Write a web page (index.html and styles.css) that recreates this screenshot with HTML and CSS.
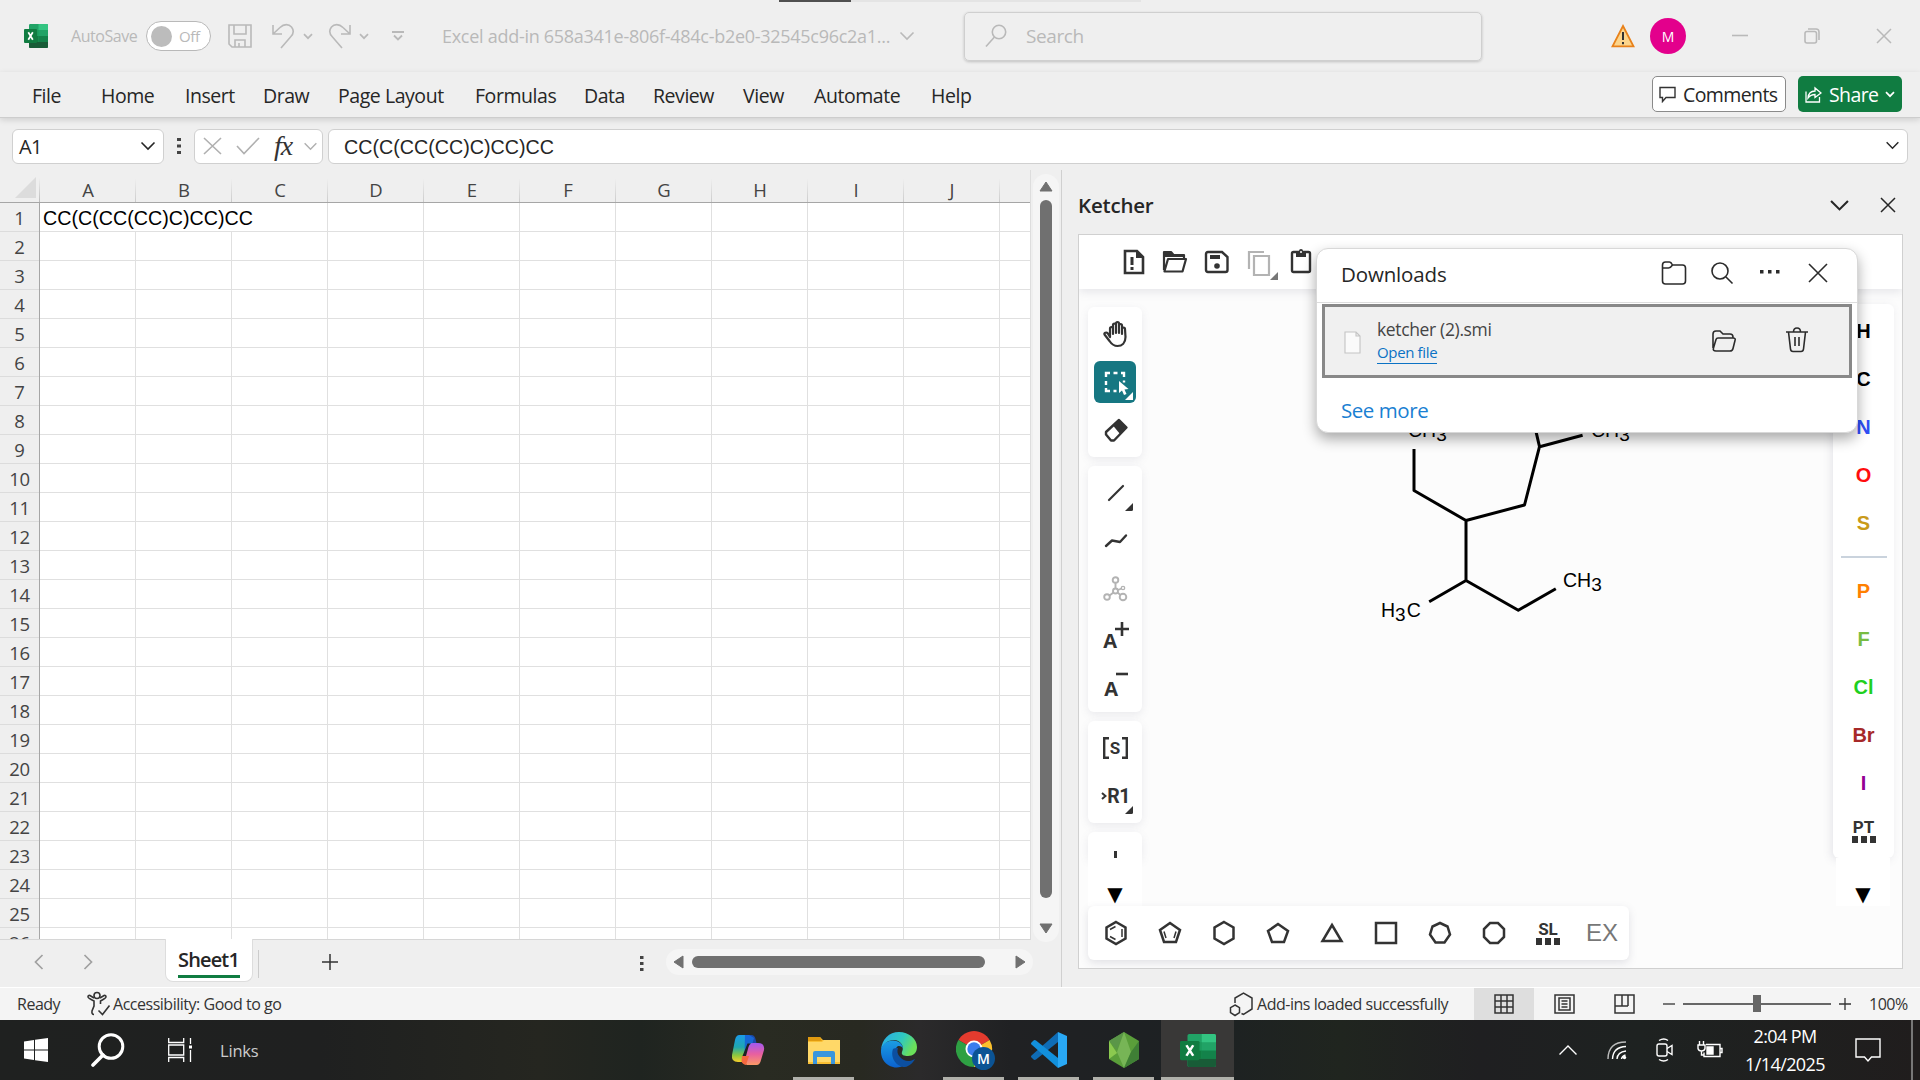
FILE: index.html
```html
<!DOCTYPE html>
<html lang="en">
<head>
<meta charset="utf-8">
<title>Excel - Ketcher add-in</title>
<link rel="stylesheet" href="styles.css">
</head>
<body>
<svg class="defs" width="0" height="0">
  <defs>
    <linearGradient id="cpA" x1="0" y1="0" x2="0" y2="1"><stop offset="0" stop-color="#1b9be8"/><stop offset=".45" stop-color="#1fa7b0"/><stop offset=".75" stop-color="#8cc63f"/><stop offset="1" stop-color="#f7d02c"/></linearGradient>
    <linearGradient id="cpB" x1="0" y1="0" x2="0" y2="1"><stop offset="0" stop-color="#a259f0"/><stop offset=".5" stop-color="#e85fa0"/><stop offset="1" stop-color="#fb9a66"/></linearGradient>
    <linearGradient id="edA" x1="0" y1="0" x2="1" y2=".4"><stop offset="0" stop-color="#2aa7ea"/><stop offset=".6" stop-color="#2fc9c0"/><stop offset="1" stop-color="#6be05a"/></linearGradient>
    <linearGradient id="edB" x1="0" y1="0" x2="0" y2="1"><stop offset="0" stop-color="#1b9de2"/><stop offset="1" stop-color="#0b62cf"/></linearGradient>
    <symbol id="chev" viewBox="0 0 16 10"><path d="M1.500 1.500 8 8l6.500-6.500" fill="none" stroke="currentColor" stroke-width="1.600"/></symbol>
    <symbol id="chevb" viewBox="0 0 10 7"><path d="M1 1.200 5 5.200l4-4" fill="none" stroke="currentColor" stroke-width="1.700"/></symbol>
    <symbol id="x" viewBox="0 0 16 16"><path d="M1 1l14 14M15 1 1 15" fill="none" stroke="currentColor" stroke-width="1.500"/></symbol>
    <symbol id="excel" viewBox="0 0 24 24">
      <rect x="5" y="0" width="19" height="24" rx="1.200" fill="#21a366"/><path d="M14.500 0h8.300A1.200 1.200 0 0 1 24 1.200V6h-9.500z" fill="#33c481"/><path d="M5 6h9.500v6H5z" fill="#1b9a5c"/><path d="M5 12h9.500v6H5z" fill="#107c41"/><path d="M14.500 12H24v6h-9.500z" fill="#13824a"/><path d="M5 18h19v4.800a1.200 1.200 0 0 1-1.200 1.200H6.200A1.200 1.200 0 0 1 5 22.800z" fill="#185c37"/>
      <rect x="0" y="5" width="13" height="14" rx="1" fill="#107c41"/><path d="M4.300 8.200l4.500 7.600M8.800 8.200l-4.500 7.600" stroke="#fff" stroke-width="1.700"/>
    </symbol>
    <symbol id="tri" viewBox="0 0 8 8"><path d="M8 0v6.500A1.500 1.500 0 0 1 6.500 8H0z" fill="currentColor"/></symbol>
  </defs>
</svg>

<header class="titlebar">
  <div class="progress"><i></i></div>
  <svg class="logo" width="24" height="24"><use href="#excel"/></svg>
  <span class="autosave">AutoSave</span>
  <div class="toggle"><i></i><span>Off</span></div>
  <svg class="ic-save" width="24" height="24" viewBox="0 0 24 24"><path d="M1 1h22v22H4l-3-3zM6 1v9h12V1M7 23v-7h10v7M11 23v-4" class="ln"/></svg>
  <svg class="ic-undo" width="23" height="26" viewBox="0 0 23 26"><path d="M1 2v9h9M1 11 8 4.500C12 .5 17 1 19.500 4c2.500 3.200 2 7-1 10L9 25" class="ln"/></svg>
  <svg class="ic-c1" width="10" height="7"><use href="#chevb"/></svg>
  <svg class="ic-redo" width="23" height="26" viewBox="0 0 23 26"><path d="M22 2v9h-9M22 11 15 4.500C11 .5 6 1 3.500 4c-2.500 3.200-2 7 1 10L14 25" class="ln"/></svg>
  <svg class="ic-c2" width="10" height="7"><use href="#chevb"/></svg>
  <svg class="ic-cust" width="12" height="12" viewBox="0 0 12 12"><path d="M0 2h12M2 5.500 6 9.500l4-4" fill="none" stroke="currentColor" stroke-width="1.800"/></svg>
  <span class="doc">Excel add-in 658a341e-806f-484c-b2e0-32545c96c2a1...</span>
  <svg class="ic-c3" width="16" height="10"><use href="#chev"/></svg>
  <div class="search">
    <svg width="22" height="24" viewBox="0 0 22 24"><circle cx="14" cy="8" r="6.700" class="ln"/><path d="M9.500 13 1 22.500" class="ln"/></svg>
    <span>Search</span>
  </div>
  <svg class="warn" width="24" height="24" viewBox="0 0 24 24"><path d="M12 2 22.500 22.300h-21z" fill="#fcd58c" stroke="#e8811a" stroke-width="1.800"/><path d="M12 8v8M12 18v2.200" stroke="#333" stroke-width="2"/></svg>
  <div class="avatar">M</div>
  <svg class="win first" width="16" height="16" viewBox="0 0 16 16"><path d="M0 7.500h16" class="ln"/></svg>
  <svg class="win" width="16" height="16" viewBox="0 0 16 16"><rect x="1" y="3.500" width="11.500" height="11.500" rx="2" class="ln"/><path d="M4 1h8q3 0 3 3v8" class="ln"/></svg>
  <svg class="win" width="16" height="16"><use href="#x"/></svg>
</header>

<nav class="ribbon">
  <div class="tabs"><span>File</span><span>Home</span><span>Insert</span><span>Draw</span><span>Page Layout</span><span>Formulas</span><span>Data</span><span>Review</span><span>View</span><span>Automate</span><span>Help</span></div>
  <div class="btn comments"><svg width="17" height="17" viewBox="0 0 17 17"><path d="M1 1.500h15v10H7l-3.500 4v-4H1z" fill="none" stroke="#333" stroke-width="1.400"/></svg><span>Comments</span></div>
  <div class="btn share"><svg width="18" height="18" viewBox="0 0 18 18"><path d="M2 6.500V17h13.500v-5M4 13c.5-5 3-7 7-7V3l6 5-6 4.500V9.500c-3 0-5 1-7 3.500z" fill="none" stroke="#fff" stroke-width="1.300"/></svg><span>Share</span><svg width="10" height="7"><use href="#chevb"/></svg></div>
</nav>

<section class="fbar">
  <div class="namebox"><span>A1</span><svg width="16" height="10"><use href="#chev"/></svg></div>
  <svg class="dots" width="4" height="18" viewBox="0 0 4 18"><path d="M0 1h4v3H0zM0 7.500h4v3H0zM0 14h4v3H0z" fill="#444"/></svg>
  <div class="fx">
    <svg width="19" height="18" viewBox="0 0 19 18"><path d="M1 1l17 16M18 1 1 17" class="ln"/></svg>
    <svg width="24" height="18" viewBox="0 0 24 18"><path d="M1 9l7 7.500L23 1" class="ln"/></svg>
    <em>fx</em>
    <svg class="c" width="15" height="9"><use href="#chev"/></svg>
  </div>
  <div class="formula"><span>CC(C(CC(CC)C)CC)CC</span><svg width="15" height="9"><use href="#chev"/></svg></div>
</section>

<main>
  <section class="book">
    <div class="sheetrow">
      <div class="sheet">
        <div class="colhead"><b></b><span>A</span><span>B</span><span>C</span><span>D</span><span>E</span><span>F</span><span>G</span><span>H</span><span>I</span><span>J</span><span class="rest"></span></div>
        <div class="rows">
          <div class="rowhead"><span>1</span><span>2</span><span>3</span><span>4</span><span>5</span><span>6</span><span>7</span><span>8</span><span>9</span><span>10</span><span>11</span><span>12</span><span>13</span><span>14</span><span>15</span><span>16</span><span>17</span><span>18</span><span>19</span><span>20</span><span>21</span><span>22</span><span>23</span><span>24</span><span>25</span><span>26</span></div>
          <div class="cells"><div class="a1">CC(C(CC(CC)C)CC)CC</div></div>
        </div>
      </div>
      <div class="vscroll"><svg width="14" height="11" viewBox="0 0 14 11"><path d="M7 1 13 10H1z" fill="#707070" stroke="#707070" stroke-linejoin="round"/></svg><i></i><svg width="14" height="11" viewBox="0 0 14 11"><path d="M7 10 1 1h12z" fill="#707070" stroke="#707070" stroke-linejoin="round"/></svg></div>
    </div>
    <div class="sheettabs">
      <svg class="prev" width="10" height="16" viewBox="0 0 10 16"><path d="M8.500 1 1.500 8l7 7" fill="none" stroke="#a0a0a0" stroke-width="1.700"/></svg>
      <svg class="next" width="10" height="16" viewBox="0 0 10 16"><path d="M1.500 1l7 7-7 7" fill="none" stroke="#a0a0a0" stroke-width="1.700"/></svg>
      <div class="tab"><span>Sheet1</span></div>
      <i class="sep"></i>
      <svg class="plus" width="18" height="18" viewBox="0 0 18 18"><path d="M9 1v16M1 9h16" stroke="#333" stroke-width="1.500"/></svg>
      <svg class="tdots" width="4" height="16" viewBox="0 0 4 16"><path d="M0 0h3.500v3H0zM0 6h3.500v3H0zM0 12h3.500v3H0z" fill="#444"/></svg>
      <div class="hscroll"><svg width="11" height="14" viewBox="0 0 11 14"><path d="M1 7 10 1v12z" fill="#707070" stroke="#707070" stroke-linejoin="round"/></svg><i></i><svg width="11" height="14" viewBox="0 0 11 14"><path d="M10 7 1 1v12z" fill="#707070" stroke="#707070" stroke-linejoin="round"/></svg></div>
    </div>
  </section>

  <aside class="pane">
    <div class="panehead"><h2>Ketcher</h2><svg width="21" height="13"><use href="#chev"/></svg><svg width="16" height="16"><use href="#x"/></svg></div>
    <div class="ketcher">
      <div class="ktop">
        <svg width="24" height="26" viewBox="0 0 24 26"><path d="M3 2h12l6 6v16H3z" fill="none" stroke="currentColor" stroke-width="2.600"/><path d="M14 2v7h7zM8.500 8h3v8h-3zM8.500 18h3v3h-3z" fill="currentColor"/></svg>
        <svg width="26" height="26" viewBox="0 0 26 26"><path d="M2 21V3h7l2.500 3H22v4M2.500 22 6 10h18l-3.500 12.500H2.500z" fill="none" stroke="currentColor" stroke-width="2.200" stroke-linejoin="round"/><path d="M2 3h7l2.500 3H22v2H2z" fill="currentColor"/></svg>
        <svg width="26" height="26" viewBox="0 0 26 26"><path d="M4 3h14l5.500 5v13q0 2-2 2H4q-2 0-2-2V5q0-2 2-2z" fill="none" stroke="currentColor" stroke-width="2.400"/><path d="M6 6h10v4H6z" fill="currentColor"/><circle cx="13" cy="17" r="2.800" fill="currentColor"/></svg>
        <svg class="dim" width="32" height="32" viewBox="0 0 32 32"><path d="M2 21V4h15M7 8h15v19H7z" fill="none" stroke="#b3b3b3" stroke-width="2.200"/><path d="M31 24v8h-8z" fill="#777"/></svg>
        <svg width="22" height="26" viewBox="0 0 22 26"><rect x="2" y="4" width="18" height="20" rx="1.500" fill="none" stroke="currentColor" stroke-width="2.400"/><path d="M6 3h3a2 2 0 0 1 4 0h3v6H6z" fill="currentColor"/><circle cx="11" cy="4" r="1" fill="#fff"/></svg>
      </div>
      <div class="kbody">
        <div class="ltools">
          <div class="group g1">
            <div class="tool"><svg width="28" height="28" viewBox="0 0 28 28"><path d="M8 17V8.500q0-1.500 1.500-1.500T11 8.500V14 5q0-1.500 1.500-1.500T14 5v8V3.500Q14 2 15.500 2T17 3.500V13 5.500Q17 4 18.500 4T20 5.500V14 9q0-1.500 1.500-1.500T23 9l.5 8c0 6-3.500 9-8 9-4 0-6-2-8-5l-5-6.500c-1-1.500 2-2.500 3-1.500z" fill="none" stroke="currentColor" stroke-width="2.200" stroke-linejoin="round"/></svg></div>
            <div class="tool sel"><svg width="42" height="42" viewBox="0 0 42 42"><path d="M12 16v-4h4M19.500 12h4M27 12h3v4M12 20v4M12 27v3h4M19.500 30h3M30 19.500v2" fill="none" stroke="#fff" stroke-width="2.400"/><path d="M25 20v12l3-2.500 2 4.500 2.500-1-2-4.500 4-.5z" fill="#fff"/><path d="M39 31v8h-8z" fill="#fff"/></svg></div>
            <div class="tool"><svg width="26" height="26" viewBox="0 0 26 26"><path d="M3 15 16 3l7.500 7.500L11 23.500H8l-5-6z" fill="none" stroke="currentColor" stroke-width="2.400" stroke-linejoin="round"/><path d="M10 8.500 16 3l7.500 7.500-6.500 6.500z" fill="currentColor"/></svg></div>
          </div>
          <div class="group g2">
            <div class="tool"><svg width="20" height="20" viewBox="0 0 20 20"><path d="M3 17 17 3" stroke="currentColor" stroke-width="2.200" stroke-linecap="round"/></svg><svg class="corner" width="8" height="8"><use href="#tri"/></svg></div>
            <div class="tool"><svg width="24" height="16" viewBox="0 0 24 16"><path d="M2 13 8 7.500 16 9l6-6.500" fill="none" stroke="currentColor" stroke-width="2.400" stroke-linecap="round" stroke-linejoin="round"/></svg></div>
            <div class="tool dim"><svg width="26" height="26" viewBox="0 0 26 26" fill="none" stroke="#b3b3b3" stroke-width="1.900"><circle cx="12.500" cy="4" r="2.800"/><circle cx="12.500" cy="15" r="2.500"/><circle cx="4" cy="21" r="2.800"/><circle cx="20" cy="21" r="3.300"/><circle cx="20" cy="12" r="1.700" stroke-width="1.300"/><path d="M12.500 7v5.500M10.500 16.500 6.500 19.500M14.500 16.500 17.500 19M15 14l3.500-1.500"/></svg></div>
            <div class="tool aplus"><b>A</b><svg width="14" height="14" viewBox="0 0 14 14"><path d="M7 0v14M0 7h14" stroke="currentColor" stroke-width="2.600"/></svg></div>
            <div class="tool aplus"><b>A</b><svg width="12" height="14" viewBox="0 0 12 14"><path d="M0 4h12" stroke="currentColor" stroke-width="2.600"/></svg></div>
          </div>
          <div class="group g3">
            <div class="tool sg"><svg width="6" height="22" viewBox="0 0 6 22"><path d="M6 1.200H1.200v19.600H6" fill="none" stroke="currentColor" stroke-width="2.400"/></svg><b>S</b><svg width="6" height="22" viewBox="0 0 6 22"><path d="M0 1.200h4.800v19.600H0" fill="none" stroke="currentColor" stroke-width="2.400"/></svg></div>
            <div class="tool rg"><svg width="6" height="8" viewBox="0 0 6 8"><path d="M1 1l3.500 3L1 7" fill="none" stroke="currentColor" stroke-width="2"/></svg><b>R1</b><svg class="corner" width="8" height="8"><use href="#tri"/></svg></div>
          </div>
          <div class="group g4"><i></i></div>
          <div class="more">▼</div>
        </div>
        <div class="canvas">
          <svg class="mol" width="300" height="230" viewBox="1360 400 300 230">
            <path d="M1414 449v41.500l52 30 58.500-15.500 15-58.300-7-30M1539.600 446.700l43-11.500M1466 520.500v60l-36.800 21.200M1466 580.500l52.300 29.700 37.500-21.500" fill="none" stroke="#000" stroke-width="3" stroke-linejoin="round"/>
            <text x="1408" y="437">CH<tspan dy="4" font-size="19">3</tspan></text>
            <text x="1591" y="437">CH<tspan dy="4" font-size="19">3</tspan></text>
            <text x="1563" y="587">CH<tspan dy="4" font-size="19">3</tspan></text>
            <text x="1381" y="617">H<tspan dy="4" font-size="19">3</tspan><tspan dy="-4" dx="1">C</tspan></text>
          </svg>
          <div class="ktemplates">
            <svg viewBox="0 0 26 26"><path d="M13 2 22.500 7.500v11L13 24 3.500 18.500v-11z"/><path d="M7 9.500l5.500-3M19 9v8M7 16.500l5.500 3" class="thin"/></svg>
            <svg viewBox="0 0 26 26"><path d="M13 3 23 10l-4 12H7L3 10z"/><path d="M7 11.500 9 18M19 11.500 17 18" class="thin"/></svg>
            <svg viewBox="0 0 26 26"><path d="M13 2 22.500 7.500v11L13 24 3.500 18.500v-11z"/></svg>
            <svg viewBox="0 0 26 26"><path d="M13 4 23 11l-4 11H7L3 11z"/></svg>
            <svg viewBox="0 0 26 26"><path d="M13 5 22.500 21h-19z"/></svg>
            <svg viewBox="0 0 26 26"><path d="M3 3h20v20H3z"/></svg>
            <svg viewBox="0 0 26 26"><path d="M13 3l7.500 3.500 2.500 8-5.500 8h-9L3 14.500l2.500-8z"/></svg>
            <svg viewBox="0 0 26 26"><path d="M9 3h8l6 6v8l-6 6H9l-6-6V9z"/></svg>
            <div class="lib"><b>SL</b><i></i></div>
            <span class="ex">EX</span>
          </div>
        </div>
        <div class="atoms">
          <div class="alist"><b class="h">H</b><b class="h">C</b><b class="n">N</b><b class="o">O</b><b class="s">S</b><hr><b class="p">P</b><b class="f">F</b><b class="cl">Cl</b><b class="br">Br</b><b class="i">I</b><div class="lib"><b>PT</b><i></i></div></div>
          <div class="more">▼</div>
        </div>
      </div>
    </div>
    <div class="downloads">
      <div class="dhead"><span>Downloads</span>
        <svg width="26" height="26" viewBox="0 0 26 26"><path d="M1.500 5q0-3 3-3h4q1.500 0 3 3h10q3 0 3 3v13q0 3-3 3h-17q-3 0-3-3zM1.500 8h6q2 0 4-3" /></svg>
        <svg width="24" height="24" viewBox="0 0 24 24"><circle cx="10" cy="10" r="8"/><path d="M16 16l6.500 6.500"/></svg>
        <svg width="22" height="6" viewBox="0 0 22 6"><path d="M1 1h3.500v3.500H1zM9 1h3.500v3.500H9zM17 1h3.500v3.500H17z" class="fill"/></svg>
        <svg width="20" height="20" viewBox="0 0 20 20"><path d="M1 1l18 18M19 1 1 19"/></svg>
      </div>
      <div class="ditem">
        <svg class="file" width="17" height="23" viewBox="0 0 17 23"><path d="M1 1h11l4 4v17H1zM12 1v4h4" fill="#fafafa" stroke="#c4c4c4" stroke-width="1.100"/></svg>
        <div class="dname"><span>ketcher (2).smi</span><a>Open file</a></div>
        <svg class="of" width="26" height="24" viewBox="0 0 26 24"><path d="M2 19V5q0-3 3-3h4l3 3h7q3 0 3 3v1M7 9h15q3 0 2 2.500l-2 8q-.5 2.500-3 2.500H5q-3.500 0-2.500-3L5 10.500Q5.500 9 7 9z"/></svg>
        <svg class="del" width="24" height="26" viewBox="0 0 24 26"><path d="M1 5h22M8.500 5q0-4 3.500-4t3.500 4M3.500 5l2 17q.3 2.500 2.500 2.500h8q2.200 0 2.500-2.500l2-17M10 10v9M14 10v9"/></svg>
      </div>
      <a class="seemore">See more</a>
    </div>
  </aside>
</main>

<footer class="status">
  <span class="ready">Ready</span>
  <svg class="acc" width="24" height="26" viewBox="0 0 24 26" fill="none" stroke="#333" stroke-width="1.600"><circle cx="10" cy="4.500" r="3"/><path d="M7 7 3 4.500Q1 4 1 6q0 1 6 4v5l-2 5q-.5 3.500 2 3.500M13 7l4-2.500q2-.5 2 1.500 0 1-5.500 4v3M11.500 19.500l4 4 7-9"/></svg>
  <span class="good">Accessibility: Good to go</span>
  <svg class="addin" width="25" height="25" viewBox="0 0 25 25" fill="none" stroke="#333" stroke-width="1.500"><path d="M6 11V6l8.500-5L23 6v11l-8.500 5.500-2-1M6 13l4.500 2.700v5L6 23.500l-4.500-2.800v-5z"/></svg>
  <span class="loaded">Add-ins loaded successfully</span>
  <div class="view on"><svg width="20" height="20" viewBox="0 0 20 20"><path d="M1 1h18v18H1zM7 1v18M13 1v18M1 7h18M1 13h18"/></svg></div>
  <div class="view"><svg width="21" height="20" viewBox="0 0 21 20"><path d="M1 1h19v18H1zM5 4h11v12H5zM7.500 7h6M7.500 10h6M7.500 13h6"/></svg></div>
  <div class="view"><svg width="21" height="20" viewBox="0 0 21 20"><path d="M1 1h19v18H1zM8 1v11M14 1v11M1 12h13"/></svg></div>
  <svg class="zm" width="12" height="12" viewBox="0 0 12 12"><path d="M0 6h12" stroke="#333" stroke-width="1.300"/></svg>
  <div class="slider"><i></i></div>
  <svg class="zp" width="12" height="12" viewBox="0 0 12 12"><path d="M0 6h12M6 0v12" stroke="#333" stroke-width="1.300"/></svg>
  <span class="pct">100%</span>
</footer>

<footer class="taskbar">
  <div class="tleft">
    <svg width="24" height="24" viewBox="0 0 24 24"><path d="M0 3.500 10 2v9.500H0zM11 1.800 24 0v11.500H11zM0 12.500h10V22L0 20.500zM11 12.500h13V24l-13-1.800z" fill="#fff"/></svg>
    <svg width="34" height="34" viewBox="0 0 34 34"><circle cx="20" cy="13.500" r="11.800" fill="none" stroke="#fff" stroke-width="3"/><path d="M12 22 2 32" stroke="#fff" stroke-width="3.600" stroke-linecap="round"/></svg>
    <svg width="24" height="24" viewBox="0 0 24 24"><path d="M.7 0v4.500h15V0M.7 24v-4.500h15V24M.7 7h15v10h-15zM22.500 0v6M22.500 12v12" fill="none" stroke="#fff" stroke-width="1.300"/><path d="M21 7.500h3v3h-3z" fill="#fff"/></svg>
    <span>Links</span>
  </div>
  <div class="apps">
    <div class="app"><svg width="36" height="36" viewBox="0 0 36 36"><path d="M9.500 3H19l5 3-6 20q-1 4-5 4H8Q1 30 2 23L5 8q1-5 4.500-5z" fill="url(#cpA)"/><path d="M15 3h6.500q3 0 4 4l1 4h-5q-3 0-4 4l-3 9z" fill="#1554d6" opacity=".75"/><path d="M26.500 33H17l-5-3 6-15q1-4 5-4h5q7 0 6 7l-3 10q-1 5-4.500 5z" fill="url(#cpB)"/><path d="M12 24h7l-3 9q-4-1-4.500-4z" fill="#f5683f"/><path d="M17.500 11.500h3.500q-2 1-2.500 3.500L16 24h-3.500z" fill="#1e2122"/></svg></div>
    <div class="app run"><svg width="36" height="36" viewBox="0 0 36 36"><path d="M2 5h12l3 3h17v24H2z" fill="#f9bf33"/><path d="M2 5h12l2 4H2z" fill="#e09a10"/><path d="M2 10h14l2-2h16v22H2z" fill="#ffd868"/><path d="M7 32V21q0-2 2-2h18q2 0 2 2v11h-4v-7H11v7z" fill="#3a96dd"/></svg></div>
    <div class="app"><svg width="36" height="36" viewBox="0 0 36 36"><path d="M0 18C1 7 8 0 18 0s18 7 18 15c0 6-4 9-9 9-4 0-7-1-6-4 3-6-2-12-8-12C7 8 2 12 0 18z" fill="url(#edA)"/><path d="M0 18C1 12 6 8.500 12 8.500c6 0 10 4 10 8-2-3-5-3-6.500-1-3 4 0 15 9 16.500C20 36 15 36 12 35 4 33-.5 26 0 18z" fill="url(#edB)"/><path d="M12 17c-3 8 3 18 12 18 4-.5 8-4 10-8-5 3-11 3-15-2-3-3-3-6-2-9-2 0-4 0-5 1z" fill="#0c4fa0"/></svg></div>
    <div class="app run chrome"><svg width="40" height="40" viewBox="0 0 40 40"><path d="M18 18 2.500 9A18 18 0 0 1 33.600 9z" fill="#e33b2e"/><path d="M18 18 33.600 9A18 18 0 0 1 18 36z" fill="#fbc02d"/><path d="M18 18v18A18 18 0 0 1 2.400 9z" fill="#2ea043"/><circle cx="18" cy="18" r="8.500" fill="#fff"/><circle cx="18" cy="18" r="6.700" fill="#3b7ded"/><circle cx="27.500" cy="27.500" r="11.500" fill="#0b5394"/><text x="27.500" y="32.500" text-anchor="middle" class="badge">M</text></svg></div>
    <div class="app run"><svg width="36" height="36" viewBox="0 0 36 36"><path d="M27 0 36 4v28l-9 4z" fill="#29a8f5"/><path d="M27 0v10L5 27.500Q3.500 28.500 2 27L.5 25.500q-1-1 0-2z" fill="#0f6cb5"/><path d="M27 36V26L5 8.500Q3.500 7.500 2 9L.5 10.500q-1 1 0 2z" fill="#1290dc"/></svg></div>
    <div class="app run"><svg width="32" height="36" viewBox="0 0 32 36"><path d="M16 0 31 9v18l-15 9L1 27V9z" fill="#5a9e3a"/><path d="M16 0 9 18 1 9z" fill="#5a9648"/><path d="M1 9l8 12-8 6z" fill="#8bc94f"/><path d="M16 0l7 20-7 16L9 20z" fill="#77b556"/><path d="M23 20 31 9v18l-15 9z" fill="#3f7f35"/></svg></div>
    <div class="app run active"><svg width="36" height="33" viewBox="0 0 24 24" preserveAspectRatio="none"><use href="#excel"/></svg></div>
  </div>
  <div class="tray">
    <svg width="20" height="12" viewBox="0 0 20 12"><path d="M1.500 10.500 10 2l8.500 8.500" /></svg>
    <svg width="20" height="20" viewBox="0 0 20 20"><path d="M1 19Q1 2 19 2" opacity=".7"/><path d="M5.500 19Q6 7 19 6.500M10 19q.5-7 9-8M14.500 19q.5-3 4-4"/><circle cx="17.500" cy="17.500" r="1.700" fill="#fff" stroke="none"/></svg>
    <svg width="20" height="24" viewBox="0 0 20 24"><rect x="2" y="6" width="10" height="12" rx="2"/><path d="M12 10.500 17 7.500v9l-5-3M4 2.500q5-3 9 0M4 21.500q5 3 9 0"/></svg>
    <svg width="26" height="20" viewBox="0 0 26 20"><path d="M9 4.500h14v12H7v-4M23 8.500h2v4h-2"/><path d="M10 7h6v7h-6z" fill="#fff"/><path d="M2.500 1v4M6.500 1v4M1 5h7v3.500Q7.500 11 4.500 11T1 8.500zM4.500 11v4H7"/></svg>
    <div class="clock"><span>2:04 PM</span><span>1/14/2025</span></div>
    <svg class="note" width="26" height="26" viewBox="0 0 26 26"><path d="M1 2h24v18h-8.500L13 24l-3.500-4H1z"/></svg>
    <i></i>
  </div>
</footer>
</body>
</html>
```
FILE: styles.css
```css
* { box-sizing: border-box; }
body { margin: 0; width: 1920px; height: 1080px; overflow: hidden; background: #efefef; font-family: "Open Sans", "Noto Sans", sans-serif; color: #262626; display: flex; flex-direction: column; white-space: nowrap; }
svg { flex: none; display: block; }
.defs { position: absolute; }
.ln { fill: none; stroke: currentColor; stroke-width: 1.6; }

/* Title bar */
.titlebar { position: relative; height: 72px; flex: none; display: flex; align-items: center; color: #b9b9b9; }
.progress { position: absolute; left: 779px; top: 0; width: 362px; height: 2px; background: #e4e4e4; }
.progress i { display: block; width: 72px; height: 2px; background: #505050; }
.logo { margin-left: 24px; }
.autosave { margin-left: 23px; width: 75px; font-size: 16px; letter-spacing: -.45px; }
.toggle { width: 65px; height: 30px; border: 1px solid #b9b9b9; border-radius: 15px; background: #fff; display: flex; align-items: center; padding-left: 4px; font-size: 15px; letter-spacing: -.4px; }
.toggle i { width: 21px; height: 21px; border-radius: 50%; background: #bcbcbc; margin-right: 7px; }
.ic-save { margin-left: 17px; }
.ic-undo { margin-left: 20px; }
.ic-c1 { margin-left: 8px; }
.ic-redo { margin-left: 15px; }
.ic-c2 { margin-left: 8px; }
.ic-cust { margin-left: 23px; }
.doc { margin-left: 38px; width: 450px; font-size: 18px; letter-spacing: -.28px; }
.ic-c3 { margin-left: 7px; }
.search { margin-left: 49px; width: 518px; height: 49px; border: 1px solid #cfcfcf; border-radius: 5px; box-shadow: 0 1px 3px #0003; display: flex; align-items: center; padding-left: 20px; gap: 19px; font-size: 19px; letter-spacing: -.4px; }
.warn { margin-left: 129px; }
.avatar { margin-left: 15px; width: 36px; height: 36px; border-radius: 50%; background: #e3008c; color: #fff; font-size: 14px; display: grid; place-items: center; }
.win { margin-left: 56px; }
.win.first { margin-left: 46px; }

/* Ribbon */
.ribbon { height: 46px; flex: none; display: flex; align-items: flex-start; padding-top: 4px; border-bottom: 1px solid #cdcdcd; box-shadow: 0 2px 6px #0002; position: relative; }
.tabs { display: flex; width: 1620px; padding-left: 32px; font-size: 19.5px; line-height: 40px; letter-spacing: -.45px; }
.tabs span { width: 69px; }
.tabs span:nth-child(2) { width: 84px; }
.tabs span:nth-child(3) { width: 78px; }
.tabs span:nth-child(4) { width: 75px; }
.tabs span:nth-child(5) { width: 137px; }
.tabs span:nth-child(6) { width: 109px; }
.tabs span:nth-child(8) { width: 90px; }
.tabs span:nth-child(9) { width: 71px; }
.tabs span:nth-child(10) { width: 117px; }
.btn { height: 36px; border-radius: 5px; display: flex; align-items: center; font-size: 19.5px; letter-spacing: -.6px; }
.comments { margin-left: 32px; width: 134px; background: #fff; border: 1px solid #8a8a8a; padding-left: 6px; gap: 7px; }
.share { margin-left: 12px; width: 104px; background: #107c41; color: #fff; padding-left: 6px; gap: 7px; }

/* Formula bar */
.fbar { height: 52px; flex: none; display: flex; align-items: center; padding: 4px 0 0 12px; }
.fbar > div { height: 35px; border: 1px solid #d0d0d0; border-radius: 6px; background: #fff; display: flex; align-items: center; }
.namebox { width: 152px; padding: 0 7px 0 6px; justify-content: space-between; font-size: 20px; letter-spacing: -.6px; }
.dots { margin-left: 13px; }
.fx { margin-left: 13px; width: 129px; padding-left: 8px; color: #b0b0b0; }
.fx svg + svg { margin-left: 14px; }
.fx em { font: italic 28px "Liberation Serif", serif; color: #333; margin-left: 14px; width: 29px; letter-spacing: -1px; }
.fx .c { margin-left: 0; }
.formula { margin-left: 5px; width: 1580px; padding: 2px 7px 0 15px; justify-content: space-between; font: 19.7px "Liberation Sans", sans-serif; }
.formula svg { margin-top: -4px; }

/* Workbook */
main { flex: none; height: 817px; display: flex; }
.book { width: 1062px; border-right: 1px solid #d0d0d0; display: flex; flex-direction: column; }
.sheetrow { display: flex; height: 770px; }
.sheet { width: 1031px; flex: none; border-right: 1px solid #ddd; border-bottom: 1px solid #d6d6d6; display: flex; flex-direction: column; }
.colhead { height: 33px; flex: none; display: flex; border-bottom: 1px solid #a6a6a6; font-size: 18.5px; color: #444; line-height: 39px; text-align: center; }
.colhead span { width: 96px; background: linear-gradient(#efefef, #ccc) right bottom / 1px 24px no-repeat; }
.colhead .rest { width: 30px; background: none; }
.colhead b { width: 40px; background: linear-gradient(#efefef, #bbb) right bottom / 1px 24px no-repeat; display: flex; justify-content: flex-end; align-items: flex-end; padding: 0 4px 4px 0; }
.colhead b::after { content: ""; border: solid transparent; border-width: 0 0 21px 21px; border-bottom-color: #dcdcdc; }
.rows { display: flex; height: 736px; overflow: hidden; }
.rowhead { width: 40px; flex: none; border-right: 1px solid #a6a6a6; }
.rowhead span { display: block; height: 29px; border-bottom: 1px solid #dcdcdc; font-size: 18.5px; line-height: 29px; text-align: center; color: #444; letter-spacing: -.3px; }
.cells { flex: 1; background: repeating-linear-gradient(90deg, transparent 0 95px, #e0e0e0 95px 96px), repeating-linear-gradient(#fff 0 28px, #e0e0e0 28px 29px); }
.a1 { width: 287px; height: 28px; background: #fff; font: 19.7px/31px "Liberation Sans", sans-serif; color: #000; padding-left: 3px; }
.vscroll { margin: 4px 0 0 2px; width: 26px; height: 768px; border-radius: 13px; background: #f5f5f5; display: flex; flex-direction: column; align-items: center; padding-top: 7px; }
.vscroll i { width: 12px; height: 698px; border-radius: 6px; background: #707070; margin: 8px 0 25px; }
.sheettabs { height: 47px; display: flex; align-items: center; }
.prev { margin: -3px 0 0 34px; }
.next { margin: -3px 0 0 39px; }
.tab { align-self: flex-start; margin: -1px 0 0 72px; width: 88px; height: 43px; background: #fff; border: 1px solid #ddd; border-top: 0; border-radius: 0 0 8px 8px; display: flex; justify-content: center; font-size: 20px; font-weight: 600; letter-spacing: -.85px; }
.tab span { width: 62px; height: 39px; border-bottom: 3px solid #107c41; line-height: 42px; }
.sep { width: 1px; height: 28px; background: #ccc; margin-left: 5px; }
.plus { margin: -3px 0 0 62px; }
.tdots { margin-left: 301px; }
.hscroll { margin: -3px 0 0 22px; width: 367px; height: 26px; border-radius: 13px; background: #f5f5f5; display: flex; align-items: center; padding-left: 7px; }
.hscroll i { width: 293px; height: 12px; border-radius: 6px; background: #707070; margin: 0 30px 0 8px; }

/* Task pane */
.pane { position: relative; flex: 1; padding-left: 16px; }
.panehead { height: 64px; display: flex; align-items: center; padding-top: 6px; }
.panehead h2 { margin: 0; font-size: 20.5px; font-weight: 600; letter-spacing: -.2px; width: 751px; }
.panehead svg + svg { margin-left: 30px; }
.ketcher { width: 825px; height: 735px; border: 1px solid #d0d0d0; background: #fcfcfc; display: flex; flex-direction: column; color: #333; overflow: hidden; }
.ktop { height: 54px; flex: none; background: #fff; box-shadow: 0 3px 9px #67688026; display: flex; align-items: center; padding-left: 43px; gap: 16px; }
.ktop .dim { margin: 3px 0 0 1px; }
.ktop .dim + svg { margin: -3px 0 0 -5px; }
.kbody { flex: 1; display: flex; padding-left: 9px; }
.ltools { width: 54px; padding-top: 18px; display: flex; flex-direction: column; gap: 9px; flex: none; height: 616px; overflow: visible; }
.group { background: #fff; border-radius: 6px; box-shadow: 0 3px 8px #6768801f; display: flex; flex-direction: column; align-items: center; flex: none; }
.g1 { height: 150px; padding-top: 6px; gap: 6px; }
.g2 { height: 246px; padding-top: 6px; gap: 6px; }
.g3 { height: 102px; padding-top: 6px; gap: 6px; }
.g4 { height: 26px; padding-top: 19px; border-radius: 6px 6px 0 0; }
.g4 i { width: 3px; height: 7px; background: #333; }
.tool { position: relative; width: 42px; height: 42px; display: flex; align-items: center; justify-content: center; }
.tool > svg:not(.corner) { margin-left: 1px; }
.tool.sel > svg:not(.corner) { margin-left: 0; }
.sel { background: #167782; border-radius: 6px; }
.corner { position: absolute; right: 3px; bottom: 3px; }
.aplus b { font-size: 20px; padding-top: 7px; letter-spacing: -.5px; }
.tool.aplus svg { margin: -16px -2px 0 -2px; }
.sg { gap: 1px; }
.sg b { font: bold 17px Roboto, sans-serif; }
.rg b { font: bold 19.5px Roboto, sans-serif; letter-spacing: -.6px; }
.more { font: 20px "DejaVu Sans", sans-serif; color: #000; text-align: center; background: #fff; }
.ltools .more { height: 48px; line-height: 72px; margin-top: -9px; }
.canvas { width: 691px; display: flex; flex-direction: column; justify-content: space-between; }
.mol { margin: 111px 0 0 218px; font: 19.5px "Liberation Sans", sans-serif; }
.ktemplates { position: relative; z-index: 1; margin: 0 0 8px -54px; width: 541px; height: 54px; background: #fff; border-radius: 6px; box-shadow: 0 3px 8px #6768802e; display: flex; align-items: center; padding-left: 1px; }
.ktemplates > * { margin: 0 14px; width: 26px; flex: none; }
.ktemplates svg { height: 26px; fill: none; stroke: #333; stroke-width: 2.5; }
.ktemplates .thin { stroke-width: 1.5; }
.lib { display: flex; flex-direction: column; align-items: center; }
.lib b { font: bold 17px/17px Roboto, sans-serif; color: #333; }
.lib i { width: 24px; height: 7px; background: repeating-linear-gradient(90deg, #333 0 6px, transparent 6px 9px); }
.ktemplates .ex { font: 24px "Liberation Sans", sans-serif; color: #777; margin-left: 11px; }
.atoms { width: 61px; padding-top: 15px; flex: none; }
.alist { height: 554px; background: #fff; border-radius: 6px; box-shadow: -2px 2px 8px #67688026; display: flex; flex-direction: column; align-items: center; padding-top: 3px; font: bold 20px "Liberation Sans", sans-serif; }
.alist > b { height: 48px; line-height: 48px; flex: none; }
.alist hr { width: 46px; height: 2px; border: 0; background: #cad3dd; margin: 9px 0 9px; flex: none; }
.alist .lib { padding-top: 12px; }
.h { color: #000; }
.n { color: #304ff7; }
.o { color: #ff0d0d; }
.s { color: #c99a19; }
.p { color: #ff8000; }
.f { color: #78bc42; }
.cl { color: #1fd01f; }
.br { color: #a62929; }
.i { color: #940094; }
.atoms .more { width: 54px; margin: 0 0 0 3px; height: 48px; line-height: 72px; }

/* Downloads flyout over the pane */
.downloads { position: absolute; left: 254px; top: 78px; width: 542px; height: 185px; background: #fff; border: 1px solid #d8d8d8; border-radius: 12px; box-shadow: 0 6px 14px #0005; z-index: 2; }
.downloads svg { fill: none; stroke: #2b2b2b; stroke-width: 1.6; }
.downloads .fill { fill: #2b2b2b; stroke: none; }
.dhead { height: 54px; border-bottom: 1px solid #ddd; padding: 0 29px 5px 24px; display: flex; align-items: center; font-size: 20.5px; font-weight: 500; letter-spacing: -.15px; }
.dhead span { flex: 1; padding-top: 2px; }
.dhead svg { margin-left: 23px; }
.dhead svg:nth-child(4) { margin: -3px 0 0 25px; }
.dhead svg:nth-child(5) { margin-left: 27px; }
.ditem { margin: 1px 5px 0; height: 74px; border: 3px solid #888; background: #f0f0f0; display: flex; align-items: center; padding-left: 19px; }
.file { margin-top: 2px; }
.dname { margin-left: 16px; width: 334px; display: flex; flex-direction: column; align-items: flex-start; font-size: 17.5px; line-height: 22px; color: #444; letter-spacing: -.35px; }
.dname a { font-size: 15px; line-height: 22px; color: #0b72c4; border-bottom: 1px solid #0b72c4; margin-top: 1px; }
.of { margin-top: -1px; }
.del { margin: -2px 0 0 48px; }
.seemore { display: block; margin: 18px 0 0 24px; font-size: 20.500px; line-height: 28px; color: #1a80d2; letter-spacing: -.45px; }

/* Status bar */
.status { height: 33px; flex: none; background: #f4f4f4; border-top: 1px solid #fff; display: flex; align-items: center; font-size: 16px; letter-spacing: -.48px; color: #333; }
.ready { margin-left: 17px; width: 70px; }
.good { margin-left: 2px; width: 1116px; }
.loaded { margin-left: 3px; width: 217px; }
.view { width: 60px; height: 32px; display: grid; place-items: center; }
.view svg { fill: none; stroke: #333; stroke-width: 1.5; }
.on { background: #dedede; }
.zm { margin-left: 9px; }
.slider { margin: 0 8px; width: 148px; height: 2px; background: #666; }
.slider i { display: block; width: 8px; height: 17px; background: #666; margin: -8px 0 0 70px; }
.pct { margin-left: 18px; }

/* Taskbar */
.taskbar { height: 60px; flex: none; display: flex; background: linear-gradient(90deg, #1f2120 0, #1f2020 320px, #252620 540px, #1f2420 640px, #292b22 760px, #282921 860px, #2b2a2b 920px, #202123 1010px, #1d2123 1200px, #20251f 1340px, #1f1f21 1480px, #1e2221 1640px, #201d1d 1920px); color: #fff; }
.tleft { width: 711px; display: flex; align-items: center; padding-left: 24px; }
.tleft svg { margin-right: 43px; }
.tleft svg:nth-child(3) { margin-right: 28px; }
.tleft span { font-size: 16.5px; color: #ccc; letter-spacing: -.2px; padding-top: 1px; }
.apps { display: flex; width: 840px; }
.app { width: 75px; height: 60px; display: grid; place-items: center; }
.app:first-child { width: 74px; }
.app:nth-child(2) { margin-left: 1px; }
.run { background: linear-gradient(#b0b0aa, #b0b0aa) center bottom / 61px 3px no-repeat; }
.app.chrome { padding: 2px 0 0 4px; }
.app.active { width: 73px; background: linear-gradient(#b0b0aa, #b0b0aa) bottom / 100% 3px no-repeat #393837; }
.badge { font: 600 14px "Open Sans", sans-serif; fill: #fff; }
.tray { flex: 1; display: flex; align-items: center; padding-left: 7px; }
.tray svg { fill: none; stroke: #fff; stroke-width: 1.4; margin-right: 29px; }
.tray svg:nth-child(3) { margin: 0 22px 0 -1px; }
.tray svg:nth-child(4) { margin-right: 2px; }
.clock { width: 120px; display: flex; flex-direction: column; align-items: center; font-size: 18px; line-height: 28px; letter-spacing: -.6px; }
.tray .note { margin: 0 30px 0 10px; }
.tray i { width: 2px; height: 60px; background: #777; }
```
